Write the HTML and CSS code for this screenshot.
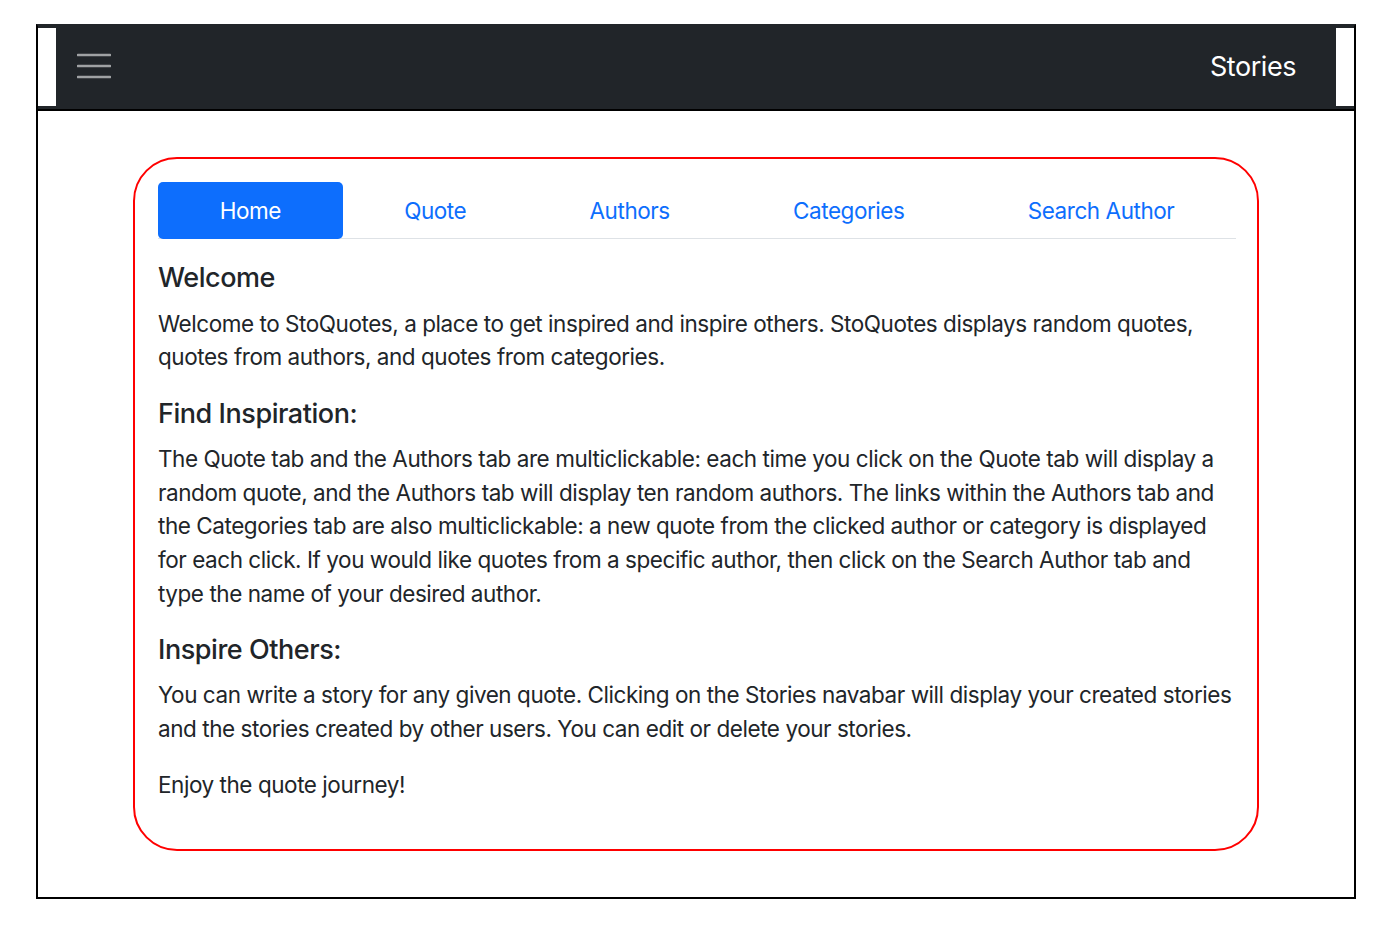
FILE: index.html
```html
<!DOCTYPE html>
<html lang="en">
<head>
    <meta charset="UTF-8">
    <title>StoQuotes</title>
    <link rel="stylesheet" href="styles.css">
</head>
<body>
    <div class="frame">
        <!--顶部导航-->
        <nav class="topbar">
            <span class="edge"></span>
            <button class="toggler" type="button">
                <svg width="34" height="34" viewBox="0 0 34 34">
                    <path d="M1 5h32M1 16h32M1 27h32" stroke="#9fa1a3" stroke-width="2.6" stroke-linecap="round" fill="none"/>
                </svg>
            </button>
            <a class="brand" href="#">Stories</a>
            <span class="edge"></span>
        </nav>

        <div class="main">
            <div class="card">
                <ul class="tabs">
                    <li><a class="current" href="#">Home</a></li>
                    <li><a href="#">Quote</a></li>
                    <li><a href="#">Authors</a></li>
                    <li><a href="#">Categories</a></li>
                    <li><a href="#">Search Author</a></li>
                </ul>

                <h5>Welcome</h5>
                <p>Welcome to StoQuotes, a place to get inspired and inspire others. StoQuotes displays random quotes, quotes from authors, and quotes from categories.</p>

                <h5>Find Inspiration:</h5>
                <p>The Quote tab and the Authors tab are multiclickable: each time you click on the Quote tab will display a random quote, and the Authors tab will display ten random authors. The links within the Authors tab and the Categories tab are also multiclickable: a new quote from the clicked author or category is displayed for each click. If you would like quotes from a specific author, then click on the Search Author tab and type the name of your desired author.</p>

                <h5>Inspire Others:</h5>
                <p>You can write a story for any given quote. Clicking on the Stories navabar will display your created stories and the stories created by other users. You can edit or delete your stories.</p>

                <p>Enjoy the quote journey!</p>
            </div>
        </div>
    </div>
</body>
</html>
```

FILE: styles.css
```css
*{
    margin: 0;
    padding: 0;
    box-sizing: border-box;
}
body{
    font-family: Inter, "Liberation Sans", sans-serif;
    font-size: 22.5px;
    line-height: 1.5;
    letter-spacing: -0.45px;
    color: #212529;
    background-color: #fff;
}
ul{
    list-style: none;
}
a{
    text-decoration: none;
}
.frame{
    width: 1320px;
    margin: 24px 0 0 36px;
    border: 2px solid #000;
    border-top-color: #212529;
}
.topbar{
    display: flex;
    align-items: center;
    height: 85px;
    padding: 2px 0 3px;
    background-color: #212529;
    border-bottom: 2px solid #000;
}
.topbar .edge{
    width: 18px;
    height: 100%;
    background-color: #fff;
}
.toggler{
    display: flex;
    margin-left: 21px;
    background: none;
    border: none;
    cursor: pointer;
}
.brand{
    margin-left: auto;
    margin-right: 40px;
    font-size: 27px;
    color: #fff;
}
.main{
    padding: 46px 95px 46px;
}
.card{
    border: 2px solid #f00;
    border-radius: 44px;
    padding: 23px 21px 24px 23px;
}
.tabs{
    display: flex;
    border-bottom: 1px solid #dee2e6;
    margin-bottom: 22.5px;
}
.tabs li{
    flex: 1 1 auto;
    text-align: center;
}
.tabs a{
    display: block;
    padding: 11.5px 22.5px;
    margin-bottom: -1px;
    color: #0d6efd;
    border-radius: 5px;
}
.tabs a.current{
    background-color: #0d6efd;
    color: #fff;
}
h5{
    font-size: 27px;
    font-weight: 500;
    line-height: 1.25;
    margin-bottom: 11.5px;
}
p{
    margin-bottom: 22.5px;
}
```
